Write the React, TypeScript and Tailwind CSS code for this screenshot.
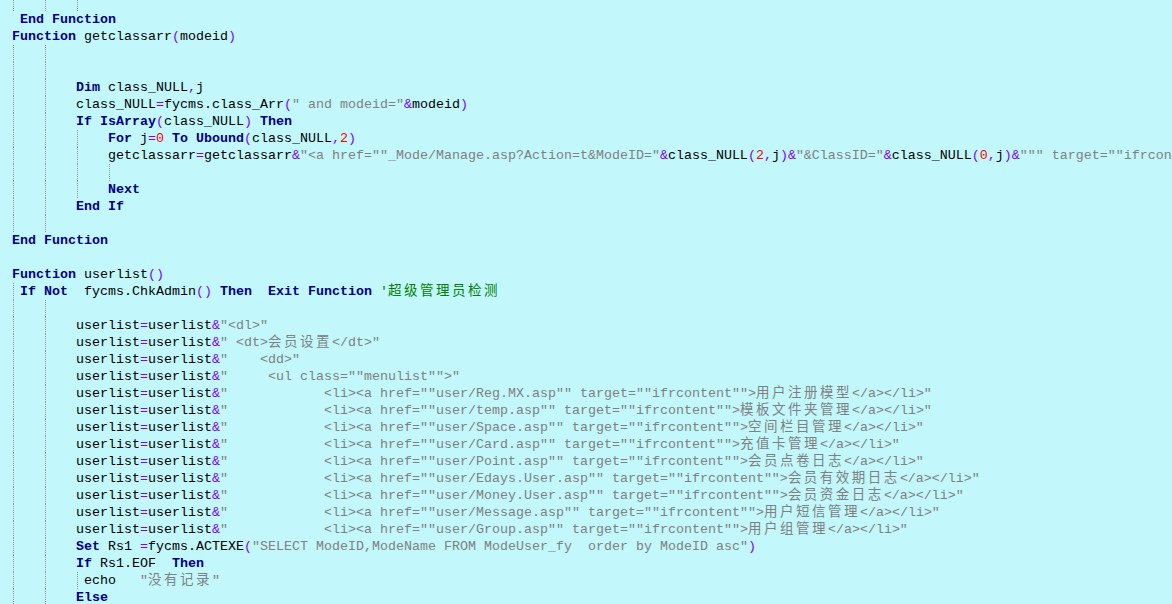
import React from "react";

type Kind = "kw" | "id" | "str" | "cmt" | "num" | "op" | "txt";

const KEYWORDS = new Set([
  "function",
  "end",
  "dim",
  "if",
  "then",
  "for",
  "to",
  "next",
  "not",
  "exit",
  "set",
  "else",
  "isarray",
  "ubound",
]);

const KIND_CLASS: Record<Kind, string> = {
  kw: "font-bold text-[#000080]",
  id: "text-black",
  str: "text-[#808080]",
  cmt: "text-[#008000]",
  num: "text-[#ff0000]",
  op: "text-[#8000ff]",
  txt: "text-black",
};

// each line: [indent guide levels, source text]
const LINES: [number[], string][] = [
  [[0, 1, 2], ""],
  [[], " End Function"],
  [[], "Function getclassarr(modeid)"],
  [[0, 1], ""],
  [[0, 1], ""],
  [[0, 1], "        Dim class_NULL,j"],
  [[0, 1], '        class_NULL=fycms.class_Arr(" and modeid="&modeid)'],
  [[0, 1], "        If IsArray(class_NULL) Then"],
  [[0, 1, 2], "            For j=0 To Ubound(class_NULL,2)"],
  [
    [0, 1, 2],
    '            getclassarr=getclassarr&"<a href=""_Mode/Manage.asp?Action=t&ModeID="&class_NULL(2,j)&"&ClassID="&class_NULL(0,j)&""" target=""ifrcontent"">"&class_NULL(1,j)&"</a>"',
  ],
  [[0, 1, 2, 3], ""],
  [[0, 1, 2], "            Next"],
  [[0, 1], "        End If"],
  [[0, 1], ""],
  [[], "End Function"],
  [[], ""],
  [[], "Function userlist()"],
  [[0], " If Not  fycms.ChkAdmin() Then  Exit Function '超级管理员检测"],
  [[0, 1], ""],
  [[0, 1], '        userlist=userlist&"<dl>"'],
  [[0, 1], '        userlist=userlist&" <dt>会员设置</dt>"'],
  [[0, 1], '        userlist=userlist&"    <dd>"'],
  [[0, 1], '        userlist=userlist&"     <ul class=""menulist"">"'],
  [[0, 1], '        userlist=userlist&"            <li><a href=""user/Reg.MX.asp"" target=""ifrcontent"">用户注册模型</a></li>"'],
  [[0, 1], '        userlist=userlist&"            <li><a href=""user/temp.asp"" target=""ifrcontent"">模板文件夹管理</a></li>"'],
  [[0, 1], '        userlist=userlist&"            <li><a href=""user/Space.asp"" target=""ifrcontent"">空间栏目管理</a></li>"'],
  [[0, 1], '        userlist=userlist&"            <li><a href=""user/Card.asp"" target=""ifrcontent"">充值卡管理</a></li>"'],
  [[0, 1], '        userlist=userlist&"            <li><a href=""user/Point.asp"" target=""ifrcontent"">会员点卷日志</a></li>"'],
  [[0, 1], '        userlist=userlist&"            <li><a href=""user/Edays.User.asp"" target=""ifrcontent"">会员有效期日志</a></li>"'],
  [[0, 1], '        userlist=userlist&"            <li><a href=""user/Money.User.asp"" target=""ifrcontent"">会员资金日志</a></li>"'],
  [[0, 1], '        userlist=userlist&"            <li><a href=""user/Message.asp"" target=""ifrcontent"">用户短信管理</a></li>"'],
  [[0, 1], '        userlist=userlist&"            <li><a href=""user/Group.asp"" target=""ifrcontent"">用户组管理</a></li>"'],
  [[0, 1], '        Set Rs1 =fycms.ACTEXE("SELECT ModeID,ModeName FROM ModeUser_fy  order by ModeID asc")'],
  [[0, 1], "        If Rs1.EOF  Then"],
  [[0, 1, 2], '         echo   "没有记录"'],
  [[0, 1], "        Else"],
];

function tokenize(line: string) {
  const out: { t: string; k: Kind }[] = [];
  let i = 0;
  while (i < line.length) {
    const c = line[i];
    if (c === '"') {
      let j = i + 1;
      while (j < line.length) {
        if (line[j] === '"') {
          if (line[j + 1] === '"') {
            j += 2;
            continue;
          }
          j++;
          break;
        }
        j++;
      }
      out.push({ t: line.slice(i, j), k: "str" });
      i = j;
    } else if (c === "'") {
      out.push({ t: line.slice(i), k: "cmt" });
      break;
    } else if (/[A-Za-z_]/.test(c)) {
      let j = i;
      while (j < line.length && /[A-Za-z0-9_]/.test(line[j])) j++;
      const w = line.slice(i, j);
      out.push({ t: w, k: KEYWORDS.has(w.toLowerCase()) ? "kw" : "id" });
      i = j;
    } else if (/[0-9]/.test(c)) {
      let j = i;
      while (j < line.length && /[0-9]/.test(line[j])) j++;
      out.push({ t: line.slice(i, j), k: "num" });
      i = j;
    } else if (/[=&(),]/.test(c)) {
      out.push({ t: c, k: "op" });
      i++;
    } else {
      out.push({ t: c, k: "txt" });
      i++;
    }
  }
  return out;
}

// CJK runs get their own font, spaced out to two columns per glyph
function Text({ text }: { text: string }) {
  const parts = text.split(/([\u3400-\u9fff]+)/);
  return (
    <>
      {parts.map((p, i) =>
        /[\u3400-\u9fff]/.test(p) ? (
          <span
            key={i}
            className="font-['Noto_Sans_CJK_SC',sans-serif] text-[13.5px] leading-[10px] tracking-[2.5px]"
          >
            {p}
          </span>
        ) : (
          <React.Fragment key={i}>{p}</React.Fragment>
        ),
      )}
    </>
  );
}

function CodeLine({ guides, text }: { guides: number[]; text: string }) {
  return (
    <div className="relative h-[17px] pl-[12px] whitespace-pre leading-[17px]">
      {guides.map((g) => (
        <span
          key={g}
          className="absolute top-0 h-full border-l border-dotted border-[#9a9a9a]"
          style={{ left: 13 + g * 32 }}
        />
      ))}
      {tokenize(text).map((tok, i) => (
        <span key={i} className={KIND_CLASS[tok.k]}>
          <Text text={tok.t} />
        </span>
      ))}
    </div>
  );
}

export default function App() {
  return (
    <div className="h-screen w-full overflow-hidden bg-[#c2f8fc]">
      <div className="-mt-[6px] font-['Liberation_Mono','Courier_New',monospace] text-[13.33px]">
        {LINES.map(([guides, text], i) => (
          <CodeLine key={i} guides={guides} text={text} />
        ))}
      </div>
    </div>
  );
}
